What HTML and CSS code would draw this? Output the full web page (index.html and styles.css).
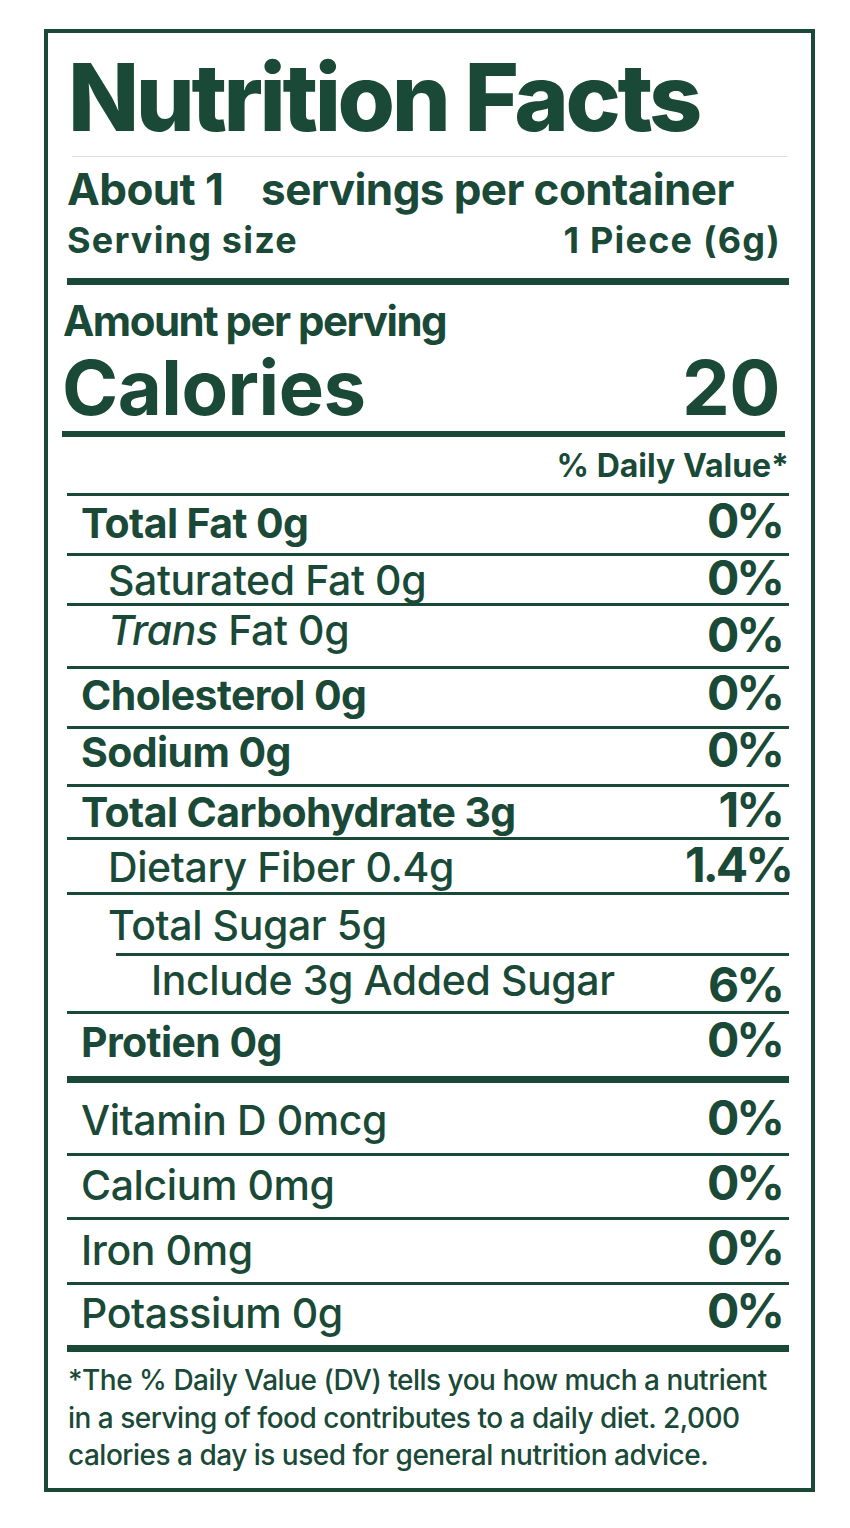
FILE: index.html
```html
<!DOCTYPE html>
<html lang="en">
<head>
<meta charset="utf-8">
<title>Nutrition Facts</title>
<link rel="stylesheet" href="styles.css">
</head>
<body>
<div class="label">
  <h1 class="title">Nutrition Facts</h1>
  <div class="servings">About 1<span class="gap"></span> servings per container</div>
  <div class="size"><span>Serving size</span><span>1 Piece (6g)</span></div>
  <div class="amount">Amount per perving</div>
  <div class="calories"><span>Calories</span><span>20</span></div>
  <div class="dv">% Daily Value*</div>

  <div class="row bold r-fat"><span class="name">Total Fat 0g</span><span class="pct">0%</span></div>
  <div class="row sub r-sat"><span class="name">Saturated Fat 0g</span><span class="pct">0%</span></div>
  <div class="row sub r-trans"><span class="name"><em>Trans</em> Fat 0g</span><span class="pct drop">0%</span></div>
  <div class="row bold r-chol"><span class="name">Cholesterol 0g</span><span class="pct">0%</span></div>
  <div class="row bold r-sod"><span class="name">Sodium 0g</span><span class="pct">0%</span></div>
  <div class="row bold r-carb"><span class="name">Total Carbohydrate 3g</span><span class="pct">1%</span></div>
  <div class="row sub r-fiber"><span class="name">Dietary Fiber 0.4g</span><span class="pct wide">1.4%</span></div>
  <div class="row sub r-sugar"><span class="name">Total Sugar 5g</span></div>
  <div class="sub-rule"></div>
  <div class="row subsub r-added"><span class="name">Include 3g Added Sugar</span><span class="pct drop">6%</span></div>
  <div class="row bold r-prot"><span class="name">Protien 0g</span><span class="pct">0%</span></div>
  <div class="row r-vit"><span class="name">Vitamin D 0mcg</span><span class="pct">0%</span></div>
  <div class="row r-cal"><span class="name">Calcium 0mg</span><span class="pct">0%</span></div>
  <div class="row r-iron"><span class="name">Iron 0mg</span><span class="pct">0%</span></div>
  <div class="row r-pot"><span class="name">Potassium 0g</span><span class="pct">0%</span></div>

  <p class="foot">*The % Daily Value (DV) tells you how much a nutrient<br>in a serving of food contributes to a daily diet. 2,000<br>calories a day is used for general nutrition advice.</p>
</div>
</body>
</html>
```

FILE: styles.css
```css
html, body {
  margin: 0;
  padding: 0;
  background: #ffffff;
}

.label {
  box-sizing: border-box;
  width: 771px;
  height: 1463px;
  margin: 29px 0 0 44px;
  border: 4px solid #1a4a37;
  padding: 0 22px 0 19px;
  color: #1a4a37;
  font-family: Inter, "Liberation Sans", sans-serif;
}

.title {
  margin: 0 2px 0 5px;
  padding: 14px 0 9px 0;
  height: 100px;
  line-height: 100px;
  font-size: 93px;
  font-weight: 800;
  letter-spacing: -3.4px;
  text-indent: -4px;
  white-space: nowrap;
  border-bottom: 1px solid #dedede;
}

.servings {
  margin-top: 7px;
  height: 50px;
  line-height: 50px;
  font-size: 44px;
  font-weight: 700;
  letter-spacing: -0.6px;
  white-space: nowrap;
}

.gap {
  display: inline-block;
  width: 28px;
}

.size {
  display: flex;
  justify-content: space-between;
  margin-top: 6px;
  height: 40px;
  line-height: 40px;
  font-size: 36px;
  font-weight: 700;
  letter-spacing: 1.2px;
  padding: 0 8px 18px 0;
  border-bottom: 7px solid #1a4a37;
}

.amount {
  margin-top: 11px;
  height: 50px;
  line-height: 50px;
  font-size: 42px;
  font-weight: 700;
  letter-spacing: -1.5px;
  margin-left: -4px;
}

.calories {
  display: flex;
  justify-content: space-between;
  margin: 1px 4px 0 -5px;
  height: 80px;
  line-height: 80px;
  font-size: 76px;
  font-weight: 700;
  letter-spacing: -0.5px;
  padding: 0 5px 4px 0;
  border-bottom: 6px solid #1a4a37;
}

.dv {
  margin-top: 9px;
  height: 40px;
  line-height: 40px;
  font-size: 32px;
  font-weight: 700;
  text-align: right;
  padding-bottom: 7px;
  border-bottom: 3px solid #1a4a37;
}

.row {
  box-sizing: border-box;
  display: flex;
  justify-content: space-between;
  align-items: baseline;
  padding: 0 7px 0 14px;
  line-height: 40px;
  font-size: 41px;
  font-weight: 500;
  letter-spacing: -0.4px;
  white-space: nowrap;
  border-bottom: 3px solid #1a4a37;
}

.row.bold { font-weight: 700; letter-spacing: -0.6px; }
.row.sub { padding-left: 41px; }
.row.subsub { padding-left: 84px; }

.pct {
  font-size: 48px;
  font-weight: 700;
  line-height: 40px;
  letter-spacing: -3px;
}

.pct.drop {
  align-self: flex-start;
  margin-top: 4.5px;
}

.pct.wide { margin-right: -9px; }

.r-fat   { height: 60px; padding-top: 4.5px; }
.r-sat   { height: 50px; padding-top: 1.5px; }
.r-trans { height: 63px; padding-top: 4px; }
.r-chol  { height: 60px; padding-top: 3.5px; }
.r-sod   { height: 58px; padding-top: 0.5px; }
.r-carb  { height: 53px; padding-top: 2.5px; }
.r-fiber { height: 55px; padding-top: 4.5px; }
.r-sugar { height: 58px; padding-top: 10px; border-bottom: 0; }
.r-added { height: 58px; padding-top: 4px; }
.r-prot  { height: 69px; padding-top: 5.5px; border-bottom-width: 7px; }
.r-vit   { height: 73px; padding-top: 14.5px; }
.r-cal   { height: 64px; padding-top: 6.5px; }
.r-iron  { height: 65px; padding-top: 7.5px; }
.r-pot   { height: 67px; padding-top: 5.5px; border-bottom-width: 7px; }

.sub-rule {
  height: 3px;
  margin-left: 49px;
  background: #1a4a37;
}

.foot {
  margin: 10px 0 0 1px;
  font-size: 28px;
  line-height: 37.5px;
  font-weight: 500;
  letter-spacing: -0.5px;
  white-space: nowrap;
}
```
